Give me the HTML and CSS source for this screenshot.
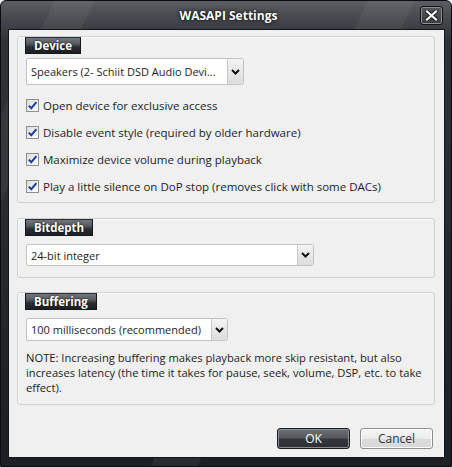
FILE: index.html
```html
<!DOCTYPE html>
<html lang="en">

<head>
    <meta charset="UTF-8">
    <meta name="viewport" content="width=device-width, initial-scale=1.0">
    <title>WASAPI Settings</title>
    <link rel="stylesheet" href="styles.css">
</head>

<body>
    <div class="window">
        <div class="titlebar">
            <span></span>
            <span class="title">WASAPI Settings</span>
            <button class="close" type="button">
                <svg width="13" height="11" viewBox="0 0 13 11">
                    <path d="M2 1.5 L11 9.5 M11 1.5 L2 9.5" stroke="#1a1a1a" stroke-width="4" stroke-linecap="square" />
                    <path d="M2 1.5 L11 9.5 M11 1.5 L2 9.5" stroke="#fff" stroke-width="2.2" stroke-linecap="square" />
                </svg>
            </button>
        </div>

        <div class="client">
            <section class="group group-device">
                <div class="tab">Device</div>
                <div class="select select-device">
                    <span class="value">Speakers (2- Schiit DSD Audio Devi...</span>
                    <span class="arrow"><svg width="9" height="6" viewBox="0 0 9 6"><path d="M1 1 L4.5 4.5 L8 1" fill="none" stroke="#111" stroke-width="2" /></svg></span>
                </div>
                <div class="checks">
                    <label class="check"><span class="box"><svg width="11" height="11" viewBox="0 0 11 11"><path d="M1.8 5.6 L4.3 8.2 L9.4 2.2" fill="none" stroke="#1b3f9c" stroke-width="2" /></svg></span>Open device for exclusive access</label>
                    <label class="check"><span class="box"><svg width="11" height="11" viewBox="0 0 11 11"><path d="M1.8 5.6 L4.3 8.2 L9.4 2.2" fill="none" stroke="#1b3f9c" stroke-width="2" /></svg></span>Disable event style (required by older hardware)</label>
                    <label class="check"><span class="box"><svg width="11" height="11" viewBox="0 0 11 11"><path d="M1.8 5.6 L4.3 8.2 L9.4 2.2" fill="none" stroke="#1b3f9c" stroke-width="2" /></svg></span>Maximize device volume during playback</label>
                    <label class="check"><span class="box"><svg width="11" height="11" viewBox="0 0 11 11"><path d="M1.8 5.6 L4.3 8.2 L9.4 2.2" fill="none" stroke="#1b3f9c" stroke-width="2" /></svg></span>Play a little silence on DoP stop (removes click with some DACs)</label>
                </div>
            </section>

            <section class="group group-bitdepth">
                <div class="tab">Bitdepth</div>
                <div class="select select-bitdepth">
                    <span class="value">24-bit integer</span>
                    <span class="arrow"><svg width="9" height="6" viewBox="0 0 9 6"><path d="M1 1 L4.5 4.5 L8 1" fill="none" stroke="#111" stroke-width="2" /></svg></span>
                </div>
            </section>

            <section class="group group-buffering">
                <div class="tab">Buffering</div>
                <div class="select select-buffering">
                    <span class="value">100 milliseconds (recommended)</span>
                    <span class="arrow"><svg width="9" height="6" viewBox="0 0 9 6"><path d="M1 1 L4.5 4.5 L8 1" fill="none" stroke="#111" stroke-width="2" /></svg></span>
                </div>
                <p class="note">NOTE: Increasing buffering makes playback more skip resistant, but also<br>increases latency (the time it takes for pause, seek, volume, DSP, etc. to take<br>effect).</p>
            </section>

            <div class="buttons">
                <button class="btn btn-ok" type="button">OK</button>
                <button class="btn" type="button">Cancel</button>
            </div>
        </div>
    </div>
</body>

</html>
```

FILE: styles.css
```css
* {
    box-sizing: border-box;
}

body {
    margin: 0;
    background: #fff;
    font-family: "Open Sans", "Noto Sans", sans-serif;
    font-size: 11.5px;
    color: #1e1e1e;
}

.window {
    width: 452px;
    height: 467px;
    display: flex;
    flex-direction: column;
    padding: 0 6px 8px 7px;
    border: 1px solid #0b0d10;
    border-radius: 6px 6px 0 0;
    background:
        linear-gradient(115deg, transparent 0 8%, rgba(255, 255, 255, 0.05) 8% 14%, transparent 14% 55%, rgba(255, 255, 255, 0.05) 55% 62%, transparent 62%),
        linear-gradient(180deg, #5b5e62 0, #45484c 18px, #2f3236 40px, #1c2024 100%);
}

/* title bar */

.titlebar {
    height: 28px;
    display: grid;
    grid-template-columns: 1fr auto 1fr;
    align-items: center;
    margin-right: 2px;
}

.title {
    color: #fff;
    font-weight: bold;
    font-size: 12px;
    text-shadow: 0 0 4px rgba(0, 0, 0, 0.9), 0 0 1px #000;
    padding-left: 6px;
}

.close {
    justify-self: end;
    width: 23px;
    height: 19px;
    margin-top: 1px;
    padding: 0;
    display: flex;
    align-items: center;
    justify-content: center;
    border: 1px solid #101215;
    border-radius: 3px;
    background: linear-gradient(180deg, #54575b, #3a3d41);
    box-shadow: inset 0 0 0 1px #8b8e92;
}

/* client area */

.client {
    flex: 1;
    display: flex;
    flex-direction: column;
    padding: 6px 9px 8px 8px;
    border: 1px solid #11161b;
    background: #f0f0f0;
}

.group {
    border: 1px solid #d0d0d0;
    border-radius: 3px;
    padding: 0 10px 9px 8px;
    box-shadow: inset 1px 1px 0 #fafafa;
}

.group + .group {
    margin-top: 15px;
}

.group-bitdepth {
    padding-bottom: 11px;
}

.group-buffering {
    margin-top: 14px !important;
}

.tab {
    align-self: flex-start;
    display: inline-block;
    height: 17px;
    padding: 0 8px;
    margin-left: -1px;
    line-height: 16px;
    color: #fff;
    font-weight: bold;
    font-size: 11.5px;
    border: 1px solid #15171a;
    border-top-color: #2b2e31;
    background: linear-gradient(180deg, #74777b 0, #55585c 40%, #2a2d31 60%, #1d2023 100%);
    text-shadow: 0 0 2px #000;
}

/* dropdowns */

.select {
    display: flex;
    align-items: stretch;
    background: #fff;
    border: 1px solid #c3c3c3;
    border-radius: 2px 3px 3px 2px;
}

.select .value {
    flex: 1;
    display: flex;
    align-items: center;
    padding-left: 4px;
    font-size: 11px;
    white-space: nowrap;
    overflow: hidden;
}

.select .arrow {
    width: 16px;
    display: flex;
    align-items: center;
    justify-content: center;
    border-left: 1px solid #c8c8c8;
    border-radius: 0 2px 2px 0;
    background: linear-gradient(180deg, #f4f4f4, #dcdcdc);
}

.select-device {
    width: 218px;
    height: 27px;
    margin-top: 4px;
}

.select-bitdepth {
    width: 288px;
    height: 22px;
    margin-top: 8px;
}

.select-buffering {
    width: 202px;
    height: 23px;
    margin-top: 8px;
}

/* checkboxes */

.checks {
    display: flex;
    flex-direction: column;
    gap: 14px;
    margin-top: 14px;
}

.check {
    display: flex;
    align-items: center;
    height: 13px;
    gap: 4px;
    white-space: nowrap;
}

.box {
    width: 13px;
    height: 13px;
    display: flex;
    align-items: center;
    justify-content: center;
    border: 1px solid #8e8f8f;
    background: linear-gradient(135deg, #dcdcdc, #fff);
}

.note {
    margin: 9px 0 0;
    font-size: 11.2px;
    line-height: 15px;
    white-space: nowrap;
}

/* buttons */

.buttons {
    display: flex;
    justify-content: flex-end;
    gap: 10px;
    margin-top: auto;
    padding-right: 2px;
}

.btn {
    width: 73px;
    height: 21px;
    padding: 0;
    font-family: inherit;
    font-size: 12px;
    color: #333;
    border: 1px solid #8f8f8f;
    border-radius: 3px;
    background: linear-gradient(180deg, #f7f7f7 0, #ebebeb 50%, #dcdcdc 51%, #d8d8d8 100%);
    box-shadow: inset 0 0 0 1px #fcfcfc;
}

.btn-ok {
    color: #fff;
    border-color: #1b1d20;
    background: linear-gradient(180deg, #6d7074 0, #55585c 48%, #34373b 52%, #2b2e32 100%);
    box-shadow: inset 0 0 0 1px #8a8d91;
}
```
